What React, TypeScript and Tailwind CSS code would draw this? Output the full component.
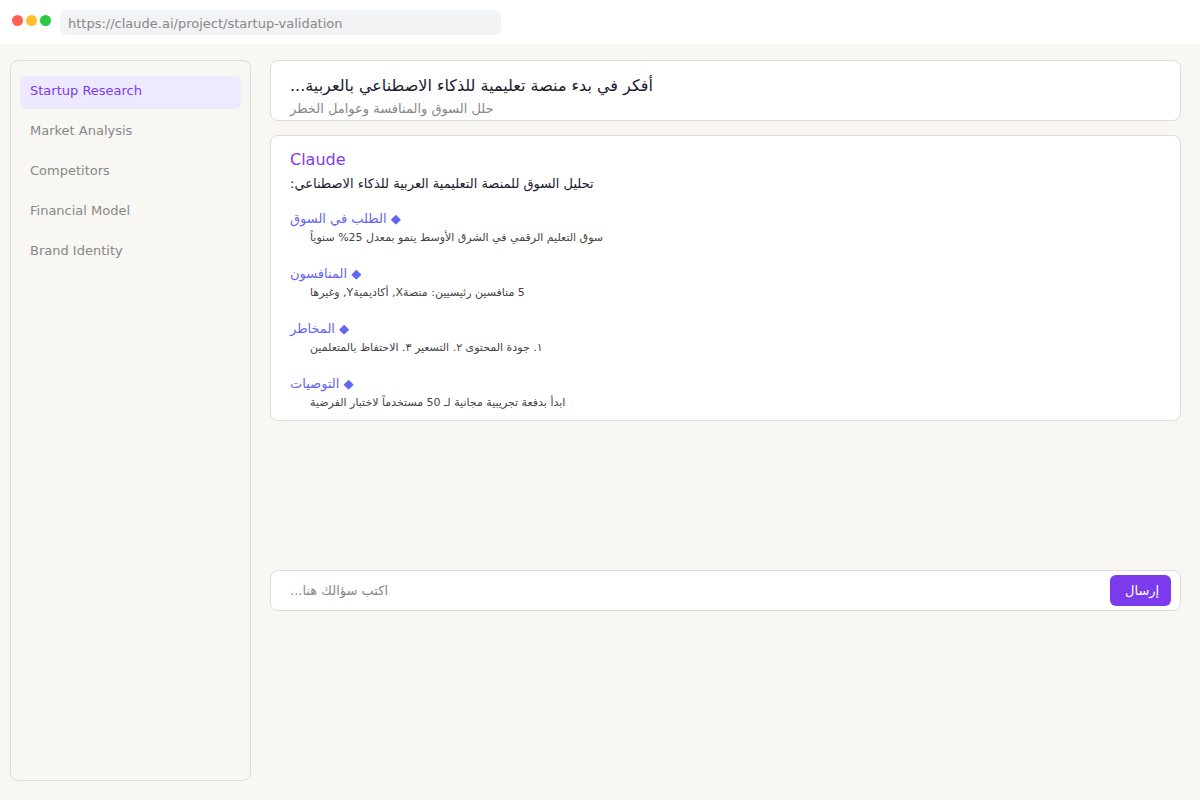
import React, { useState } from 'react';

const navItems = ['Startup Research', 'Market Analysis', 'Competitors', 'Financial Model', 'Brand Identity'];

const sections = [
  { title: 'الطلب في السوق', text: 'سوق التعليم الرقمي في الشرق الأوسط ينمو بمعدل 25% سنوياً' },
  { title: 'المنافسون', text: '5 منافسين رئيسيين: منصةX, أكاديميةY, وغيرها' },
  { title: 'المخاطر', text: '١. جودة المحتوى ٢. التسعير ٣. الاحتفاظ بالمتعلمين' },
  { title: 'التوصيات', text: 'ابدأ بدفعة تجريبية مجانية لـ 50 مستخدماً لاختبار الفرضية' },
];

const BrowserBar: React.FC = () => {
  const [url, setUrl] = useState('https://claude.ai/project/startup-validation');

  return (
    <header className="flex h-11 items-start bg-white pl-3 pt-[10px]">
      <div className="flex gap-[3px] pt-[5px]">
        <span className="size-[11px] rounded-full bg-[#ff5f57]" />
        <span className="size-[11px] rounded-full bg-[#febc2e]" />
        <span className="size-[11px] rounded-full bg-[#28c840]" />
      </div>
      <input
        type="text"
        aria-label="Address"
        value={url}
        onChange={e => setUrl(e.target.value)}
        className="ml-[9px] h-[25px] w-[441px] rounded-md bg-[#f1f3f5] px-2 pt-[2px] text-[13px] text-[#888888] outline-none"
      />
    </header>
  );
};

const Sidebar: React.FC = () => {
  const [active, setActive] = useState(navItems[0]);

  return (
    <nav className="flex w-[241px] shrink-0 flex-col gap-[7px] rounded-lg border border-[#e0ddd8] px-[9px] py-[15px]">
      {navItems.map(item => (
        <button
          key={item}
          type="button"
          onClick={() => setActive(item)}
          className={`h-[33px] rounded-md px-[10px] pb-1 text-left text-[13px] leading-5 ${
            item === active ? 'bg-[#ede9fe] text-[#7c3aed]' : 'text-[#888888]'
          }`}
        >
          {item}
        </button>
      ))}
    </nav>
  );
};

const Composer: React.FC = () => {
  const [question, setQuestion] = useState('');

  return (
    <form
      onSubmit={e => e.preventDefault()}
      className="mt-[149px] flex h-[41px] items-center rounded-lg border border-[#e0ddd8] bg-white pl-[19px] pr-[9px]"
    >
      <input
        type="text"
        dir="rtl"
        aria-label="اكتب سؤالك هنا"
        placeholder="اكتب سؤالك هنا..."
        value={question}
        onChange={e => setQuestion(e.target.value)}
        className="h-5 min-w-0 flex-1 text-left text-[13px] text-[#1a1a2e] outline-none placeholder:text-[#888888]"
      />
      <button type="submit" className="h-[31px] w-[61px] rounded-md bg-[#7c3aed] pl-[15px] text-left text-[13px] leading-5 text-white">
        إرسال
      </button>
    </form>
  );
};

export default function App() {
  return (
    <div className="flex min-h-screen flex-col bg-[#f8f7f3] font-['DejaVu_Sans',sans-serif]">
      <BrowserBar />
      <div className="flex flex-1 gap-[19px] pb-[19px] pl-[10px] pr-[19px] pt-4">
        <Sidebar />
        <main className="flex min-w-0 flex-1 flex-col">
          <section dir="rtl" className="rounded-lg border border-[#e0ddd8] bg-white px-[19px] pb-[1px] pt-[15px] text-left">
            <h1 className="text-base leading-5 text-[#1a1a2e]">أفكر في بدء منصة تعليمية للذكاء الاصطناعي بالعربية...</h1>
            <p className="mt-[3px] text-[13px] leading-5 text-[#888888]">حلل السوق والمنافسة وعوامل الخطر</p>
          </section>

          <article className="mt-[14px] rounded-lg border border-[#e0ddd8] bg-white px-[19px] pb-[9px] pt-[14px]">
            <h2 className="text-base leading-5 text-[#7c3aed]">Claude</h2>
            <div dir="rtl" className="mt-1 text-left">
              <p className="text-[13px] leading-5 text-[#1a1a2e]">تحليل السوق للمنصة التعليمية العربية للذكاء الاصطناعي:</p>
              <div className="mt-[15px] flex flex-col gap-[18px]">
                {sections.map(section => (
                  <div key={section.title}>
                    <h3 className="text-[13px] leading-5 text-[#6366f1]">◆ {section.title}</h3>
                    <p className="mt-[1px] pl-5 text-[11px] leading-4 text-[#444444]">{section.text}</p>
                  </div>
                ))}
              </div>
            </div>
          </article>

          <Composer />
        </main>
      </div>
    </div>
  );
}
